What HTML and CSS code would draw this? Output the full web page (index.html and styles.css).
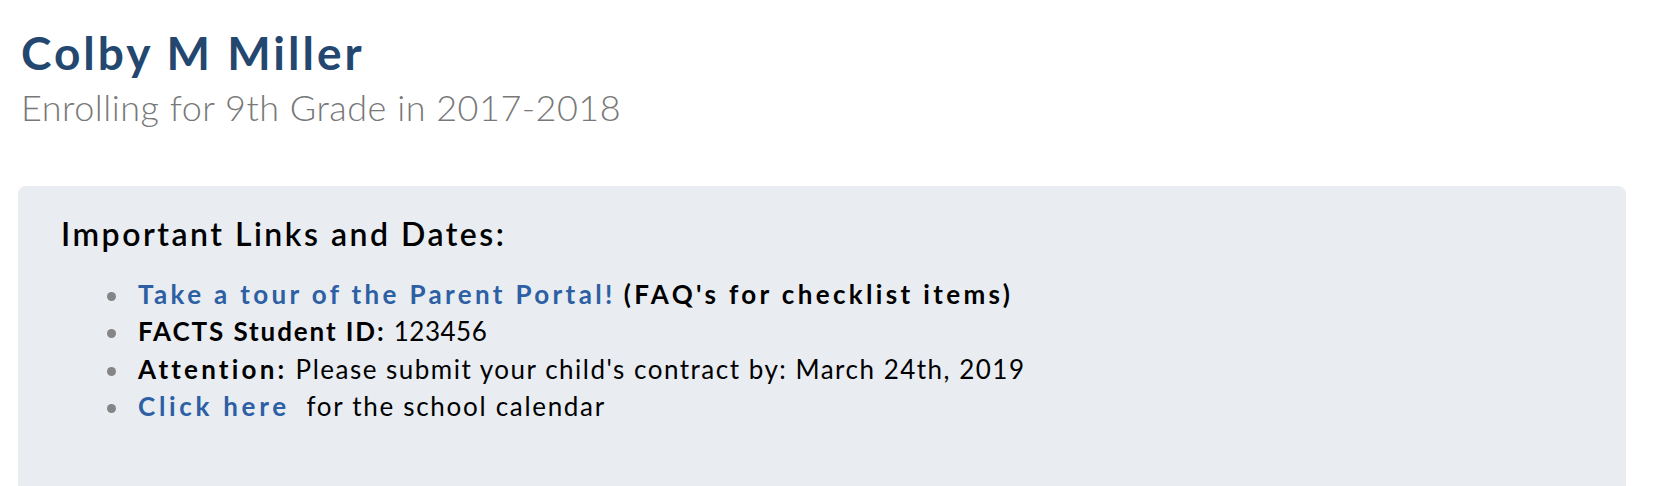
FILE: index.html
```html
<!DOCTYPE html>
<html lang="en">
<head>
<meta charset="utf-8">
<title>Colby M Miller</title>
<link rel="stylesheet" href="styles.css">
</head>
<body>
  <header class="student-header">
    <h1 class="student-name">Colby M Miller</h1>
    <p class="student-sub">Enrolling for 9th Grade in 2017-2018</p>
  </header>
  <section class="info-card">
    <h2 class="card-title">Important Links and Dates:</h2>
    <ul class="link-list">
      <li class="row-tour"><a class="link" href="#">Take a tour of the Parent Portal!</a> <strong>(FAQ's for checklist items)</strong></li>
      <li class="row-id"><strong>FACTS Student ID:</strong> <span class="num">123456</span></li>
      <li><strong>Attention:</strong> Please submit your child's contract by: March 24th, 2019</li>
      <li class="row-cal"><a class="link" href="#">Click here</a>&nbsp; for the school calendar</li>
    </ul>
  </section>
</body>
</html>
```
FILE: styles.css
```css
html, body {
  margin: 0;
  padding: 0;
  background: #ffffff;
}
body {
  font-family: Lato, "Open Sans", sans-serif;
  color: #000000;
  overflow: hidden;
}
.student-header {
  padding: 25px 0 0 21px;
}
.student-name {
  margin: 0;
  font-size: 46px;
  line-height: 1.2;
  font-weight: 700;
  letter-spacing: 3px;
  color: #23476f;
}
.student-sub {
  margin: 6px 0 0 0;
  font-size: 36px;
  line-height: 1.2;
  font-weight: 300;
  letter-spacing: 0.5px;
  color: #787878;
}
.info-card {
  margin: 57px 40px 0 18px;
  padding: 29px 43px 80px 43px;
  background: #e9ecf1;
  border-radius: 8px;
}
.card-title {
  margin: 0;
  font-size: 32px;
  line-height: 1.2;
  font-weight: 600;
  letter-spacing: 2.5px;
}
.link-list {
  list-style: none;
  margin: 22px 0 0 0;
  padding: 0 0 0 46px;
  font-size: 26px;
  line-height: 37.5px;
  letter-spacing: 1.5px;
}
.link-list li::before {
  content: "";
  display: inline-block;
  width: 9px;
  height: 9px;
  border-radius: 50%;
  background: #858585;
  margin-right: 22px;
  vertical-align: 3px;
}
.link-list strong {
  font-weight: 700;
  letter-spacing: 3.2px;
}
.link {
  color: #2c5fa3;
  font-weight: 700;
  letter-spacing: 3.2px;
  text-decoration: none;
}
.row-tour .link,
.row-tour strong {
  letter-spacing: 3.35px;
}
.row-id strong {
  letter-spacing: 1.9px;
}
.row-id .num {
  letter-spacing: 0.5px;
}
.row-cal {
  letter-spacing: 1.7px;
}
.row-cal .link {
  letter-spacing: 3.7px;
}
```
